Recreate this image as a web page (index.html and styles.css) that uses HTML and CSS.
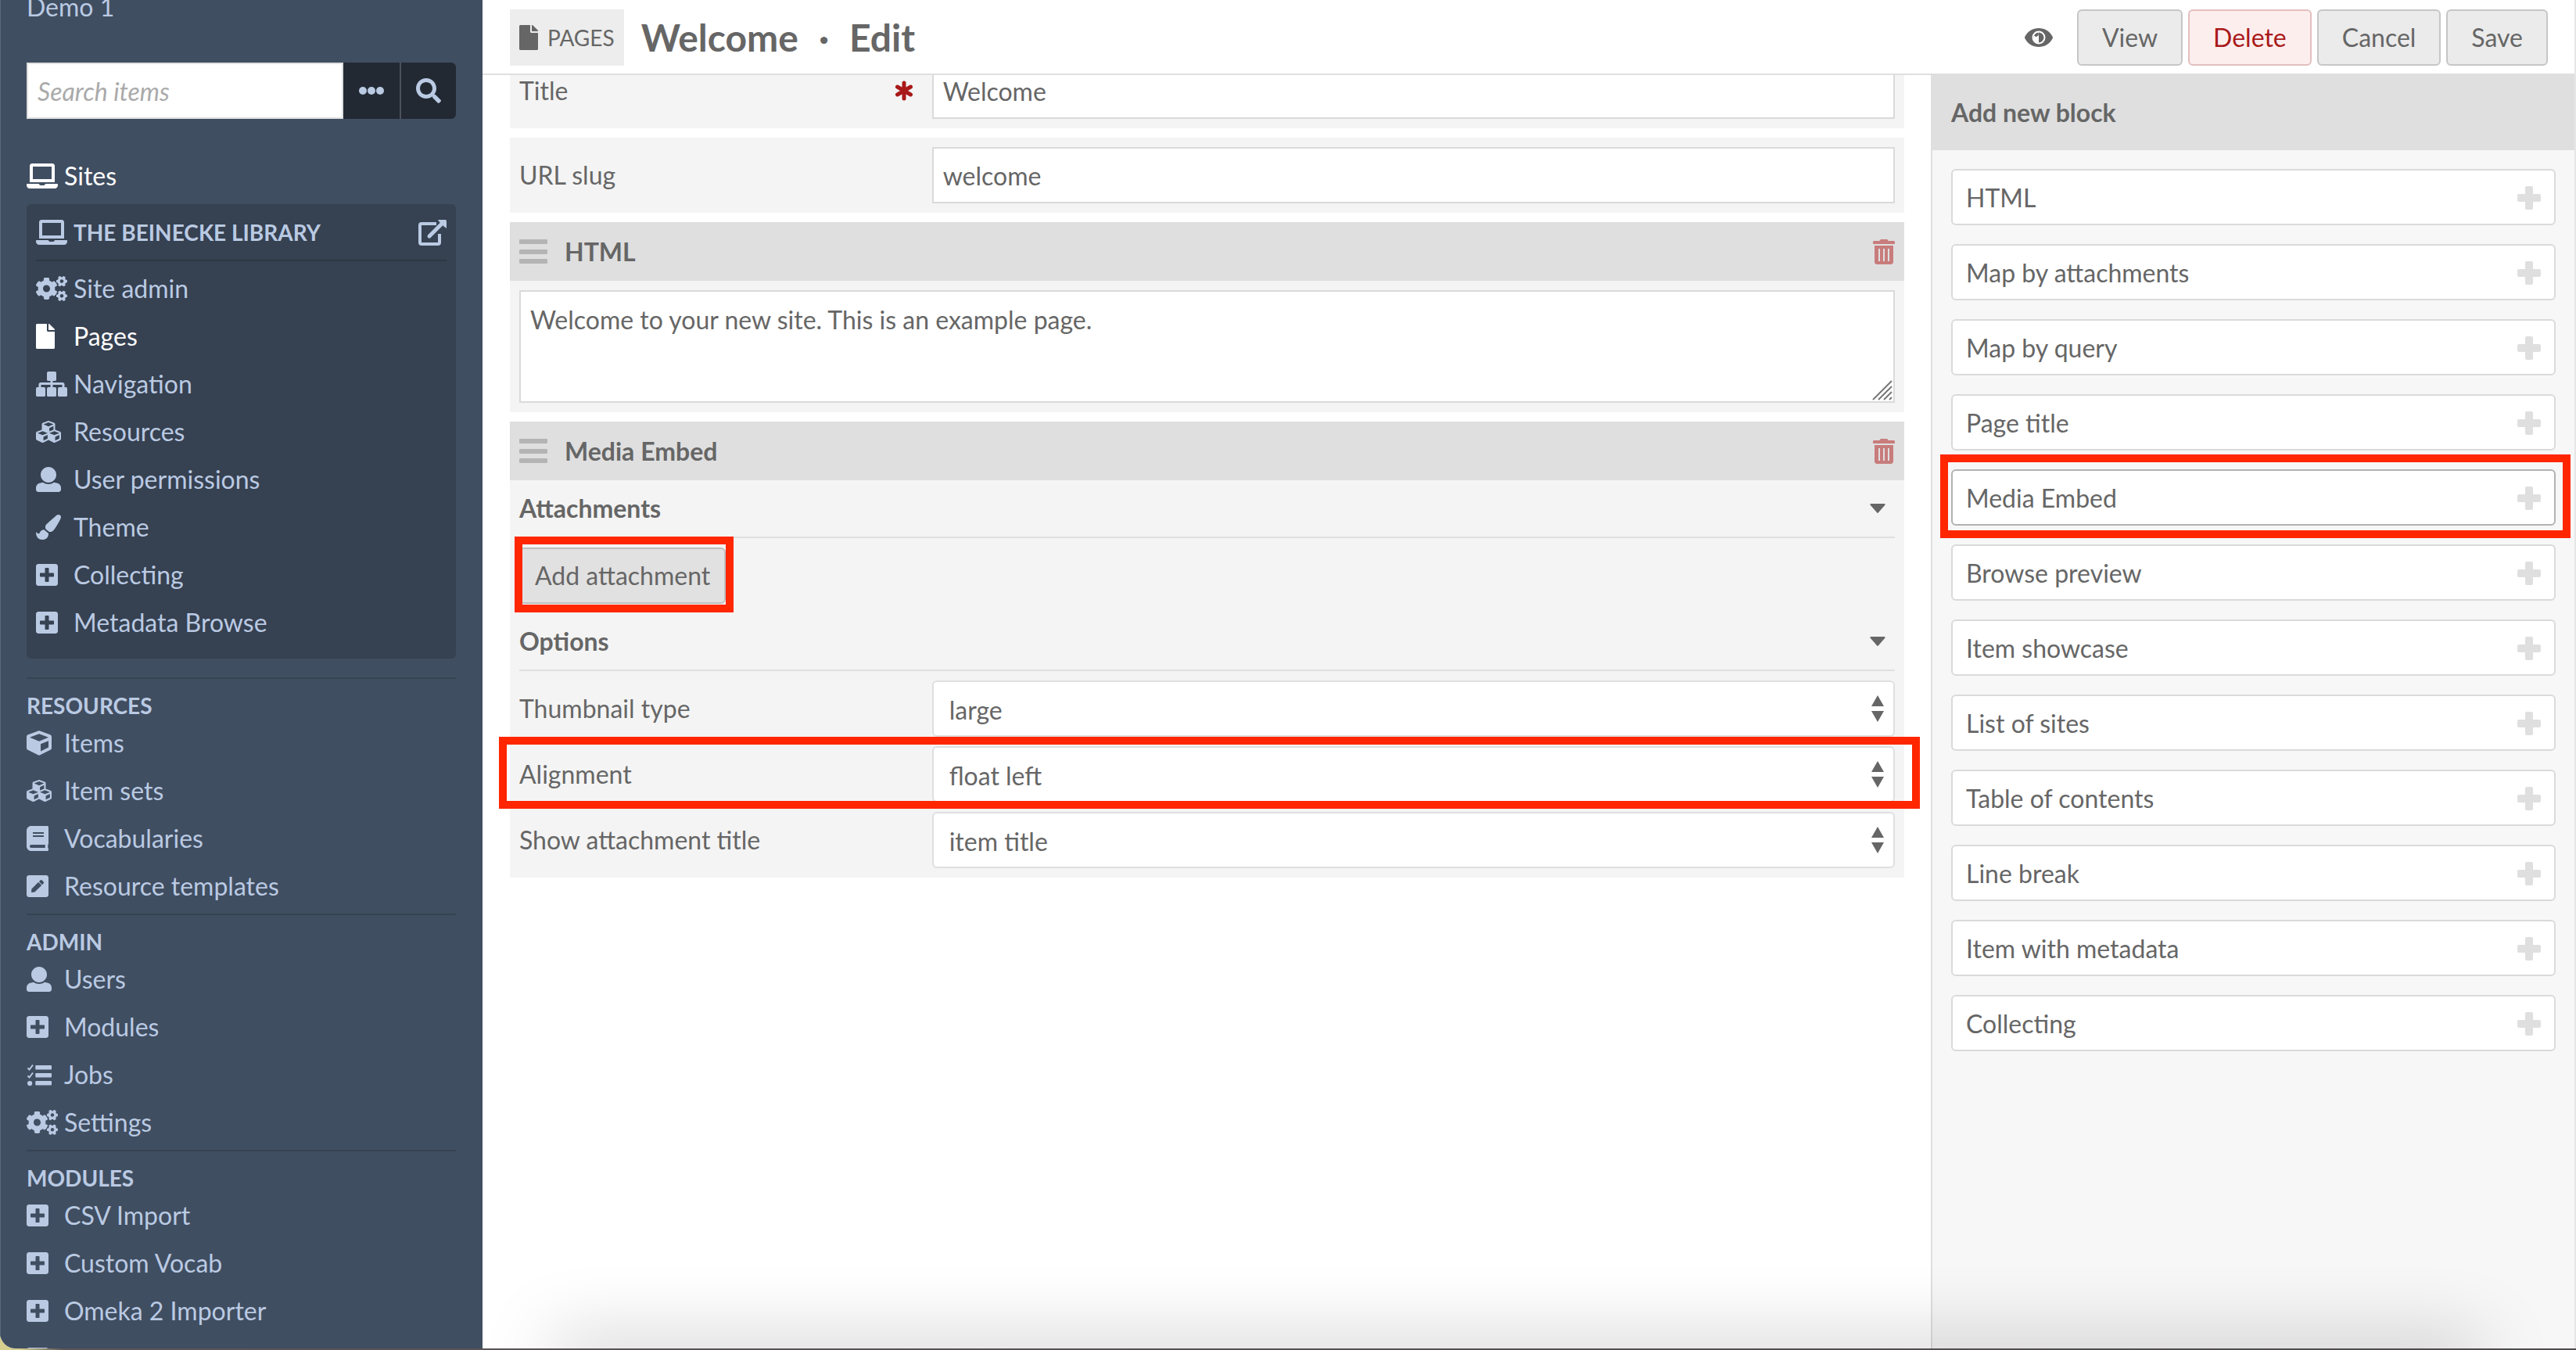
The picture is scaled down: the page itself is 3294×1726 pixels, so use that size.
FILE: index.html
```html
<!DOCTYPE html>
<html lang="en">
<head>
<meta charset="utf-8">
<title>Welcome · Edit</title>
<link rel="stylesheet" href="styles.css">
</head>
<body>
<svg class="sprite" aria-hidden="true">
  <symbol id="i-laptop" viewBox="0 0 640 512" preserveAspectRatio="xMinYMid"><path d="M624 416H381.54c-.74 19.81-14.71 32-32.74 32H288c-18.69 0-33.02-17.47-32.77-32H16c-8.8 0-16 7.2-16 16v16c0 35.2 28.8 64 64 64h512c35.2 0 64-28.8 64-64v-16c0-8.8-7.2-16-16-16zM576 48c0-26.4-21.6-48-48-48H112C85.6 0 64 21.6 64 48v336h512V48zm-64 272H128V64h384v256z"/></symbol>
  <symbol id="i-file" viewBox="0 0 384 512" preserveAspectRatio="xMinYMid"><path d="M224 136V0H24C10.7 0 0 10.7 0 24v464c0 13.3 10.7 24 24 24h336c13.3 0 24-10.7 24-24V160H248c-13.2 0-24-10.8-24-24zm160-14.1v6.1H256V0h6.1c6.4 0 12.5 2.5 17 7l97.9 98c4.5 4.5 7 10.6 7 16.9z"/></symbol>
  <symbol id="i-cogs" viewBox="0 0 640 512" preserveAspectRatio="xMinYMid">
    <path id="small-gear" d="M512.1 191l-8.2 14.3c-3 5.3-9.4 7.5-15.1 5.4-11.8-4.4-22.6-10.7-32.1-18.6-4.6-3.8-5.8-10.5-2.8-15.7l8.2-14.3c-6.9-8-12.3-17.3-15.9-27.4h-16.5c-6 0-11.2-4.3-12.2-10.3-2-12-2.1-24.6 0-37.1 1-6 6.2-10.4 12.2-10.4h16.5c3.6-10.1 9-19.4 15.9-27.4l-8.2-14.3c-3-5.2-1.9-11.9 2.8-15.7 9.5-7.9 20.4-14.2 32.1-18.6 5.7-2.1 12.1.1 15.1 5.4l8.2 14.3c10.5-1.9 21.2-1.9 31.7 0L552 6.3c3-5.3 9.4-7.5 15.1-5.4 11.8 4.4 22.6 10.7 32.1 18.6 4.6 3.8 5.8 10.5 2.8 15.7l-8.2 14.3c6.9 8 12.3 17.3 15.9 27.4h16.5c6 0 11.2 4.3 12.2 10.3 2 12 2.1 24.6 0 37.1-1 6-6.2 10.4-12.2 10.4h-16.5c-3.6 10.1-9 19.4-15.9 27.4l8.2 14.3c3 5.2 1.9 11.9-2.8 15.7-9.5 7.9-20.4 14.2-32.1 18.6-5.7 2.1-12.1-.1-15.1-5.4l-8.2-14.3c-10.4 1.9-21.2 1.9-31.7 0zm-10.5-58.8c38.5 29.6 82.4-14.3 52.8-52.8-38.5-29.7-82.4 14.3-52.8 52.8z"/>
    <use href="#small-gear" transform="translate(0 298.9)"/>
    <path d="M386.3 286.1l33.7 16.8c10.1 5.8 14.5 18.1 10.5 29.1-8.9 24.2-26.4 46.4-42.6 65.8-7.4 8.9-20.2 11.1-30.3 5.3l-29.1-16.8c-16 13.7-34.6 24.6-54.9 31.7v33.6c0 11.6-8.3 21.6-19.7 23.6-24.6 4.2-50.4 4.4-75.9 0-11.5-2-20-11.9-20-23.6V418c-20.3-7.2-38.9-18-54.9-31.7L74 403c-10 5.8-22.9 3.6-30.3-5.3-16.2-19.4-33.3-41.6-42.2-65.7-4-10.9.4-23.2 10.5-29.1l33.3-16.8c-3.9-20.9-3.9-42.4 0-63.4L12 205.8c-10.1-5.8-14.6-18.1-10.5-29 8.9-24.2 26-46.4 42.2-65.8 7.4-8.9 20.2-11.1 30.3-5.3l29.1 16.8c16-13.7 34.6-24.6 54.9-31.7V57.1c0-11.5 8.2-21.5 19.6-23.5 24.6-4.2 50.5-4.4 76-.1 11.5 2 20 11.9 20 23.6v33.6c20.3 7.2 38.9 18 54.9 31.7l29.1-16.8c10-5.8 22.9-3.6 30.3 5.3 16.2 19.4 33.2 41.6 42.1 65.8 4 10.9.1 23.2-10 29.1l-33.7 16.8c3.9 21 3.9 42.5 0 63.5zm-117.6 21.1c59.2-77-28.7-164.9-105.7-105.7-59.2 77 28.7 164.9 105.7 105.7z"/>
  </symbol>
  <symbol id="i-sitemap" viewBox="0 0 640 512" preserveAspectRatio="xMinYMid"><rect x="224" width="192" height="192" rx="30"/><rect y="320" width="192" height="192" rx="30"/><rect x="224" y="320" width="192" height="192" rx="30"/><rect x="448" y="320" width="192" height="192" rx="30"/><path d="M296 180h48v44h201.600c21.200 0 38.400 17.200 38.400 38.400V330h-48v-58H344v58h-48v-58H104v58H56v-67.600c0-21.200 17.200-38.400 38.400-38.400H296z"/></symbol>
  <symbol id="i-cubes" viewBox="0 0 512 512" preserveAspectRatio="xMinYMid"><path d="M488.6 250.2L392 214V105.5c0-15-9.3-28.4-23.4-33.7l-100-37.5c-8.1-3.1-17.1-3.1-25.3 0l-100 37.5c-14.1 5.3-23.4 18.7-23.4 33.7V214l-96.6 36.2C9.3 255.5 0 268.9 0 283.9V394c0 13.6 7.7 26.1 19.9 32.2l100 50c10.1 5.1 22.1 5.1 32.2 0l103.9-52 103.9 52c10.1 5.1 22.1 5.1 32.2 0l100-50c12.2-6.1 19.9-18.6 19.9-32.2V283.9c0-15-9.3-28.4-23.4-33.7zM358 214.8l-85 31.9v-68.2l85-37v73.3zM154 104.1l102-38.2 102 38.2v.6l-102 41.4-102-41.4v-.6zm84 291.1l-85 42.5v-79.1l85-38.8v75.4zm0-112l-102 41.4-102-41.4v-.6l102-38.2 102 38.2v.6zm240 112l-85 42.5v-79.1l85-38.8v75.4zm0-112l-102 41.4-102-41.4v-.6l102-38.2 102 38.2v.6z"/></symbol>
  <symbol id="i-cube" viewBox="0 0 512 512" preserveAspectRatio="xMinYMid"><path d="M239.1 6.3l-208 78c-18.7 7-31.1 25-31.1 45v225.1c0 18.2 10.3 34.8 26.5 42.9l208 104c13.5 6.8 29.4 6.8 42.9 0l208-104c16.3-8.1 26.5-24.8 26.5-42.9V129.3c0-20-12.4-37.9-31.1-44.9l-208-78C262 2.2 250 2.2 239.1 6.3zM256 68.4l192 72v1.1l-192 78-192-78v-1.1l192-72zm32 356V275.5l160-65v133.9l-160 80z"/></symbol>
  <symbol id="i-user" viewBox="0 0 512 512" preserveAspectRatio="xMinYMid"><path d="M256 0c88.366 0 160 71.634 160 160s-71.634 160-160 160S96 248.366 96 160 167.634 0 256 0zm183.283 333.821l-71.313-17.828c-74.923 53.89-165.738 41.864-223.94 0l-71.313 17.828C29.981 344.505 0 382.903 0 426.955V464c0 26.51 21.49 48 48 48h416c26.51 0 48-21.49 48-48v-37.045c0-44.052-29.981-82.45-72.717-93.134z"/></symbol>
  <symbol id="i-brush" viewBox="0 0 512 512" preserveAspectRatio="xMinYMid"><path d="M167.02 309.34c-40.12 2.58-76.53 17.86-97.19 72.3-2.35 6.21-8 9.98-14.59 9.98-11.11 0-45.46-27.67-55.25-34.35C0 439.62 37.93 512 128 512c75.86 0 128-43.77 128-120.19 0-3.11-.65-6.08-.97-9.13l-88.01-73.34zM457.89 0c-15.16 0-29.37 6.71-40.21 16.45C213.27 199.05 192 203.34 192 257.09c0 13.7 3.25 26.76 8.73 38.7l63.82 53.18c7.21 1.8 14.64 3.03 22.39 3.03 62.11 0 98.11-45.47 211.16-256.46 7.38-14.35 13.9-29.85 13.9-45.99C512 20.64 486 0 457.89 0z"/></symbol>
  <symbol id="i-plus-square" viewBox="0 0 448 512" preserveAspectRatio="xMinYMid"><path d="M400 32H48C21.5 32 0 53.5 0 80v352c0 26.5 21.5 48 48 48h352c26.5 0 48-21.5 48-48V80c0-26.5-21.5-48-48-48zm-32 252c0 6.6-5.4 12-12 12h-92v92c0 6.6-5.4 12-12 12h-56c-6.6 0-12-5.4-12-12v-92H92c-6.6 0-12-5.4-12-12v-56c0-6.6 5.4-12 12-12h92v-92c0-6.6 5.4-12 12-12h56c6.6 0 12 5.4 12 12v92h92c6.6 0 12 5.4 12 12v56z"/></symbol>
  <symbol id="i-book" viewBox="0 0 448 512" preserveAspectRatio="xMinYMid"><path d="M448 360V24c0-13.3-10.7-24-24-24H96C43 0 0 43 0 96v320c0 53 43 96 96 96h328c13.3 0 24-10.7 24-24v-16c0-7.5-3.5-14.3-8.9-18.7-4.2-15.4-4.2-59.3 0-74.7 5.4-4.3 8.9-11.1 8.9-18.6zM128 134c0-3.3 2.7-6 6-6h212c3.3 0 6 2.7 6 6v20c0 3.3-2.7 6-6 6H134c-3.3 0-6-2.7-6-6v-20zm0 64c0-3.3 2.7-6 6-6h212c3.3 0 6 2.7 6 6v20c0 3.3-2.7 6-6 6H134c-3.3 0-6-2.7-6-6v-20zm253.4 250H96c-17.7 0-32-14.3-32-32 0-17.6 14.4-32 32-32h285.4c-1.9 17.1-1.9 46.9 0 64z"/></symbol>
  <symbol id="i-pen-square" viewBox="0 0 448 512" preserveAspectRatio="xMinYMid"><path d="M400 480H48c-26.5 0-48-21.500-48-48V80c0-26.500 21.500-48 48-48h352c26.500 0 48 21.500 48 48v352c0 26.500-21.500 48-48 48zM238.100 177.900L102.400 313.600l-6.300 57.100c-.8 7.600 5.600 14.100 13.300 13.300l57.100-6.300L302.200 242c2.300-2.300 2.300-6.100 0-8.500L246.700 178c-2.500-2.400-6.300-2.400-8.600-.1zM345 165.100L314.900 135c-9.400-9.400-24.600-9.400-33.900 0l-23.100 23.100c-2.300 2.300-2.300 6.100 0 8.500l55.500 55.500c2.300 2.300 6.100 2.300 8.500 0L345 199c9.300-9.300 9.300-24.500 0-33.900z"/></symbol>
  <symbol id="i-tasks" viewBox="0 0 512 512" preserveAspectRatio="xMinYMid"><path d="M22 118l34 34 72-94M22 278l34 34 72-94" fill="none" stroke="currentColor" stroke-width="30"/><circle cx="66" cy="432" r="50"/><rect x="180" y="62" width="332" height="88" rx="16"/><rect x="180" y="222" width="332" height="88" rx="16"/><rect x="180" y="382" width="332" height="88" rx="16"/></symbol>
  <symbol id="i-search" viewBox="0 0 512 512"><path d="M505 442.7L405.3 343c-4.5-4.5-10.6-7-17-7H372c27.600-35.300 44-79.700 44-128C416 93.100 322.900 0 208 0S0 93.100 0 208s93.100 208 208 208c48.300 0 92.700-16.400 128-44v16.300c0 6.400 2.500 12.500 7 17l99.700 99.700c9.400 9.400 24.600 9.400 33.900 0l28.300-28.300c9.400-9.400 9.400-24.600.1-34zM208 336c-70.700 0-128-57.200-128-128 0-70.700 57.200-128 128-128 70.700 0 128 57.200 128 128 0 70.700-57.200 128-128 128z"/></symbol>
  <symbol id="i-dots" viewBox="0 0 32 32"><circle cx="5" cy="16" r="5"/><circle cx="16" cy="16" r="5"/><circle cx="27" cy="16" r="5"/></symbol>
  <symbol id="i-external" viewBox="0 0 36 34"><path d="M23 6H4a2 2 0 0 0-2 2v22a2 2 0 0 0 2 2h21a2 2 0 0 0 2-2V19" fill="none" stroke="currentColor" stroke-width="4"/><path d="M14 22L32 4" fill="none" stroke="currentColor" stroke-width="5" stroke-linecap="round"/><path d="M25 1h9.500a1.500 1.500 0 0 1 1.500 1.500V12l-4-3-5-5z"/></symbol>
  <symbol id="i-eye" viewBox="0 0 36 26"><path fill-rule="evenodd" d="M18 1C10.500 1 4 5 .5 11.500a3 3 0 0 0 0 3C4 21 10.500 25 18 25s14-4 17.500-10.500a3 3 0 0 0 0-3C32 5 25.500 1 18 1zm0 3.500a8.500 8.500 0 1 1 0 17 8.500 8.500 0 0 1 0-17zm0 2a6.500 6.500 0 1 0 6.500 6.500A6.500 6.500 0 0 0 17 6.600a3 3 0 1 1-4.800 4A6.500 6.500 0 0 0 18 19.500z"/></symbol>
  <symbol id="i-asterisk" viewBox="0 0 24 26"><path d="M12 3v20M3.500 8l17 10M20.500 8l-17 10" fill="none" stroke="currentColor" stroke-width="5" stroke-linecap="round"/></symbol>
  <symbol id="i-bars" viewBox="0 0 36 32"><rect y="0" width="36" height="6" rx="1"/><rect y="13" width="36" height="6" rx="1"/><rect y="25" width="36" height="6" rx="1"/></symbol>
  <symbol id="i-trash" viewBox="0 0 448 512"><path fill-rule="evenodd" d="M0 84V56c0-13.300 10.700-24 24-24h112l9.400-18.700c4-8.200 12.300-13.300 21.400-13.300h114.300c9.100 0 17.400 5.100 21.500 13.300L312 32h112c13.300 0 24 10.700 24 24v28c0 6.600-5.400 12-12 12H12C5.400 96 0 90.600 0 84zM32 128h384v336c0 26.500-21.500 48-48 48H80c-26.500 0-48-21.500-48-48zM112 192v256h32V192zm96 0v256h32V192zm96 0v256h32V192z"/></symbol>
  <symbol id="i-plus" viewBox="0 0 30 30"><path d="M12 0h6a2 2 0 0 1 2 2v8h8a2 2 0 0 1 2 2v6a2 2 0 0 1-2 2h-8v8a2 2 0 0 1-2 2h-6a2 2 0 0 1-2-2v-8H2a2 2 0 0 1-2-2v-6a2 2 0 0 1 2-2h8V2a2 2 0 0 1 2-2z"/></symbol>
  <symbol id="i-caret" viewBox="0 0 20 12"><path d="M1.500 0h17a1 1 0 0 1 .8 1.700l-8.300 9.600a1.300 1.300 0 0 1-2 0L.7 1.700A1 1 0 0 1 1.500 0z"/></symbol>
  <symbol id="i-sort" viewBox="0 0 16 34"><path d="M8 0l8 14H0zM8 34l8-14H0z"/></symbol>
  <symbol id="i-grip" viewBox="0 0 26 26"><path d="M1 25L25 1M8 25L25 8M15 25l10-10M22 25l3-3" fill="none" stroke="currentColor" stroke-width="2"/></symbol>
</svg>

<div class="window">
  <aside class="sidebar">
    <a class="brand" href="#">Demo 1</a>
    <form class="search">
      <input class="search-input" type="text" placeholder="Search items" aria-label="Search items">
      <button class="search-btn" type="button" aria-label="Search options"><svg class="icon"><use href="#i-dots"/></svg></button>
      <button class="search-btn search-go" type="button" aria-label="Search"><svg class="icon"><use href="#i-search"/></svg></button>
    </form>
    <a class="nav-link active sites" href="#"><svg class="icon"><use href="#i-laptop"/></svg>Sites</a>
    <nav class="site-box">
      <div class="site-title">
        <a class="site-name" href="#"><svg class="icon"><use href="#i-laptop"/></svg>THE BEINECKE LIBRARY</a>
        <a class="external" href="#" aria-label="Open site"><svg><use href="#i-external"/></svg></a>
      </div>
      <ul class="nav-list">
        <li><a class="nav-link" href="#"><svg class="icon"><use href="#i-cogs"/></svg>Site admin</a></li>
        <li><a class="nav-link active" href="#"><svg class="icon"><use href="#i-file"/></svg>Pages</a></li>
        <li><a class="nav-link" href="#"><svg class="icon"><use href="#i-sitemap"/></svg>Navigation</a></li>
        <li><a class="nav-link" href="#"><svg class="icon"><use href="#i-cubes"/></svg>Resources</a></li>
        <li><a class="nav-link" href="#"><svg class="icon"><use href="#i-user"/></svg>User permissions</a></li>
        <li><a class="nav-link" href="#"><svg class="icon"><use href="#i-brush"/></svg>Theme</a></li>
        <li><a class="nav-link" href="#"><svg class="icon"><use href="#i-plus-square"/></svg>Collecting</a></li>
        <li><a class="nav-link" href="#"><svg class="icon"><use href="#i-plus-square"/></svg>Metadata Browse</a></li>
      </ul>
    </nav>
    <nav class="nav-section">
      <h4>RESOURCES</h4>
      <ul class="nav-list">
        <li><a class="nav-link" href="#"><svg class="icon"><use href="#i-cube"/></svg>Items</a></li>
        <li><a class="nav-link" href="#"><svg class="icon"><use href="#i-cubes"/></svg>Item sets</a></li>
        <li><a class="nav-link" href="#"><svg class="icon"><use href="#i-book"/></svg>Vocabularies</a></li>
        <li><a class="nav-link" href="#"><svg class="icon"><use href="#i-pen-square"/></svg>Resource templates</a></li>
      </ul>
    </nav>
    <nav class="nav-section">
      <h4>ADMIN</h4>
      <ul class="nav-list">
        <li><a class="nav-link" href="#"><svg class="icon"><use href="#i-user"/></svg>Users</a></li>
        <li><a class="nav-link" href="#"><svg class="icon"><use href="#i-plus-square"/></svg>Modules</a></li>
        <li><a class="nav-link" href="#"><svg class="icon"><use href="#i-tasks"/></svg>Jobs</a></li>
        <li><a class="nav-link" href="#"><svg class="icon"><use href="#i-cogs"/></svg>Settings</a></li>
      </ul>
    </nav>
    <nav class="nav-section">
      <h4>MODULES</h4>
      <ul class="nav-list">
        <li><a class="nav-link" href="#"><svg class="icon"><use href="#i-plus-square"/></svg>CSV Import</a></li>
        <li><a class="nav-link" href="#"><svg class="icon"><use href="#i-plus-square"/></svg>Custom Vocab</a></li>
        <li><a class="nav-link" href="#"><svg class="icon"><use href="#i-plus-square"/></svg>Omeka 2 Importer</a></li>
        <li><span class="nav-link"><svg class="icon"><use href="#i-plus-square"/></svg></span></li>
      </ul>
    </nav>
  </aside>

  <main class="main">
    <header class="page-header">
      <span class="section-tag"><svg class="icon"><use href="#i-file"/></svg>PAGES</span>
      <h1 class="page-title"><span>Welcome</span><span class="dot">·</span><span>Edit</span></h1>
      <div class="actions">
        <button class="eye" type="button" aria-label="Visibility"><svg><use href="#i-eye"/></svg></button>
        <button class="btn" type="button">View</button>
        <button class="btn danger" type="button">Delete</button>
        <button class="btn" type="button">Cancel</button>
        <button class="btn" type="button">Save</button>
      </div>
    </header>
    <div class="columns">
      <div class="content">
        <form class="page-form">
          <div class="field">
            <label class="field-label" for="title">Title<svg class="required"><use href="#i-asterisk"/></svg></label>
            <input class="text-input" id="title" type="text" value="Welcome">
          </div>
          <div class="field">
            <label class="field-label" for="slug">URL slug</label>
            <input class="text-input" id="slug" type="text" value="welcome">
          </div>
          <section class="block">
            <header class="block-header"><svg class="bars"><use href="#i-bars"/></svg><h2>HTML</h2><button class="trash" type="button" aria-label="Remove block"><svg><use href="#i-trash"/></svg></button></header>
            <div class="html-body">
              <textarea class="html-text" aria-label="HTML">Welcome to your new site. This is an example page.</textarea>
              <svg class="grip"><use href="#i-grip"/></svg>
            </div>
          </section>
          <section class="block">
            <header class="block-header"><svg class="bars"><use href="#i-bars"/></svg><h2>Media Embed</h2><button class="trash" type="button" aria-label="Remove block"><svg><use href="#i-trash"/></svg></button></header>
            <div class="embed-body">
              <h3 class="group-title">Attachments<svg class="caret"><use href="#i-caret"/></svg></h3>
              <div class="attach marked marked-attach"><button class="btn attach-btn" type="button">Add attachment</button></div>
              <h3 class="group-title">Options<svg class="caret"><use href="#i-caret"/></svg></h3>
              <div class="option-list">
                <div class="option">
                  <label class="field-label" for="thumb">Thumbnail type</label>
                  <div class="select-wrap"><select id="thumb"><option>large</option></select><svg class="sort"><use href="#i-sort"/></svg></div>
                </div>
                <div class="option marked marked-option">
                  <label class="field-label" for="align">Alignment</label>
                  <div class="select-wrap"><select id="align"><option>float left</option></select><svg class="sort"><use href="#i-sort"/></svg></div>
                </div>
                <div class="option">
                  <label class="field-label" for="showtitle">Show attachment title</label>
                  <div class="select-wrap"><select id="showtitle"><option>item title</option></select><svg class="sort"><use href="#i-sort"/></svg></div>
                </div>
              </div>
            </div>
          </section>
        </form>
      </div>
      <aside class="panel">
        <h2 class="panel-title">Add new block</h2>
        <ul class="block-list">
          <li><button class="add" type="button">HTML<svg><use href="#i-plus"/></svg></button></li>
          <li><button class="add" type="button">Map by attachments<svg><use href="#i-plus"/></svg></button></li>
          <li><button class="add" type="button">Map by query<svg><use href="#i-plus"/></svg></button></li>
          <li><button class="add" type="button">Page title<svg><use href="#i-plus"/></svg></button></li>
          <li class="marked marked-block"><button class="add focused" type="button">Media Embed<svg><use href="#i-plus"/></svg></button></li>
          <li><button class="add" type="button">Browse preview<svg><use href="#i-plus"/></svg></button></li>
          <li><button class="add" type="button">Item showcase<svg><use href="#i-plus"/></svg></button></li>
          <li><button class="add" type="button">List of sites<svg><use href="#i-plus"/></svg></button></li>
          <li><button class="add" type="button">Table of contents<svg><use href="#i-plus"/></svg></button></li>
          <li><button class="add" type="button">Line break<svg><use href="#i-plus"/></svg></button></li>
          <li><button class="add" type="button">Item with metadata<svg><use href="#i-plus"/></svg></button></li>
          <li><button class="add" type="button">Collecting<svg><use href="#i-plus"/></svg></button></li>
        </ul>
      </aside>
    </div>
    <div class="dock-shadow"></div>
  </main>
</div>
</body>
</html>
```
FILE: styles.css
```css
*, *::before, *::after { box-sizing: border-box; }

body {
  margin: 0;
  height: 100vh;
  padding-bottom: 2px;
  overflow: hidden;
  background: linear-gradient(90deg, #d6cf8e 0, #d6cf8e 24px, #5b5557 80px, #504b4d 100%);
  color: #666;
  font: 32px/48px Lato, "Open Sans", sans-serif;
  text-rendering: optimizeLegibility;
}

h1, h2, h3, h4, ul { margin: 0; padding: 0; font-size: inherit; list-style: none; }
a { color: inherit; text-decoration: none; }
button, input, select, textarea { margin: 0; font: inherit; color: inherit; border-radius: 0; text-rendering: inherit; }
button { cursor: pointer; }
svg { display: block; fill: currentColor; flex: none; }
.sprite { position: absolute; width: 0; height: 0; }

.window {
  display: flex;
  height: 100%;
  overflow: hidden;
  background: #fff;
  border-right: 2px solid #e6e6e6;
  border-bottom-left-radius: 20px;
}

/* Sidebar */
.sidebar {
  flex: none;
  width: 617px;
  padding: 0 34px 0 33px;
  overflow: hidden;
  background: #404e61;
  border-left: 1px solid #5a6778;
  color: #bacae3;
}
.brand { display: block; margin-top: -15px; }
.search { display: flex; height: 72px; margin-top: 47px; }
.search-input {
  flex: 1;
  min-width: 0;
  padding: 2px 12px 0;
  border: 2px solid #dfdfdf;
  background: #fff;
  color: #666;
}
.search-input::placeholder { color: #aaa; font-style: italic; opacity: 1; }
.search-btn {
  display: flex;
  align-items: center;
  justify-content: center;
  width: 72px;
  padding: 0;
  border: 0;
  background: #222933;
}
.search-btn .icon { width: 32px; height: 32px; }
.search-go { border-left: 2px solid #4b515b; border-radius: 0 6px 6px 0; }

.nav-link { display: flex; align-items: center; height: 61px; white-space: nowrap; }
.nav-link .icon, .site-name .icon { width: 40px; height: 32px; margin-right: 8px; }
.active { color: #fff; }
.sites { margin: 42px 0 6px; }
.site-box { padding: 0 12px 16px; border-radius: 6px; background: #364151; }
.site-title {
  display: flex;
  justify-content: space-between;
  align-items: center;
  height: 73px;
  margin-bottom: 4px;
  border-bottom: 2px solid #2c3844;
}
.site-name { display: flex; align-items: center; font-size: 28px; font-weight: 700; }
.external svg { width: 36px; height: 34px; }
.nav-section { margin-bottom: 5px; padding-top: 17px; border-top: 2px solid #364353; }
.site-box + .nav-section { margin-top: 24px; }
.nav-section h4 { font-size: 28px; line-height: 34px; }

/* Main area */
.main { position: relative; flex: 1; min-width: 0; display: flex; flex-direction: column; overflow: hidden; }
.page-header {
  display: flex;
  align-items: center;
  flex: none;
  height: 96px;
  padding: 2px 34px 0 35px;
  border-bottom: 2px solid #dfdfdf;
}
.section-tag {
  display: flex;
  align-items: center;
  gap: 12px;
  height: 72px;
  padding: 0 12px;
  background: #ededed;
  font-size: 28px;
}
.section-tag .icon { width: 24px; height: 32px; }
.page-title { display: flex; gap: 26px; margin-left: 22px; font-size: 48px; font-weight: 700; }
.actions { display: flex; align-items: center; gap: 7px; margin-left: auto; }
.eye { padding: 0; margin-right: 24px; border: 0; background: none; }
.eye svg { width: 36px; height: 26px; }
.btn {
  height: 72px;
  padding: 0 30px;
  border: 2px solid #c6c6c6;
  border-radius: 6px;
  background: #ebebeb;
}
.danger { border-color: #e4bfbf; background: #fdeeee; color: #a91919; }

.columns { display: flex; flex: 1; min-height: 0; }
.content { flex: 1; min-width: 0; padding: 0 34px 0 35px; overflow: hidden; }
/* The form is scrolled a little way under the header. */
.page-form { display: flex; flex-direction: column; gap: 12px; margin-top: -28px; }
.field { display: flex; align-items: center; padding: 12px; background: #f4f4f4; }
.field-label { display: flex; align-items: center; justify-content: space-between; width: 30%; padding-right: 24px; }
.required { width: 24px; height: 26px; color: #a91919; }
.text-input { width: 70%; height: 72px; padding: 0 12px; border: 2px solid #dadada; background: #fff; }

.block { background: #f4f4f4; }
.block-header { display: flex; align-items: center; height: 75px; padding: 0 12px; background: #dfdfdf; }
.bars { width: 36px; height: 32px; margin-right: 22px; color: #b4b4b4; }
.trash { margin-left: auto; padding: 0; border: 0; background: none; color: #c87c7c; }
.trash svg { width: 28px; height: 32px; }
.html-body { position: relative; padding: 12px; }
.html-text {
  display: block;
  width: 100%;
  height: 144px;
  padding: 12px;
  border: 2px solid #dadada;
  background: #fff;
  resize: none;
}
.grip { position: absolute; right: 15px; bottom: 15px; width: 26px; height: 26px; color: #777; }

.embed-body { padding: 0 12px 12px; }
.group-title {
  display: flex;
  align-items: center;
  justify-content: space-between;
  height: 74px;
  padding-right: 12px;
  border-bottom: 2px solid #dfdfdf;
}
.caret { width: 20px; height: 12px; }
.attach { width: fit-content; margin: 12px 0; }
.attach-btn { display: block; padding: 0 18px; border-color: #bebebe; background: #e1e1e1; }
.option-list { display: flex; flex-direction: column; gap: 12px; margin-top: 12px; }
.option { display: flex; align-items: center; }
.select-wrap { position: relative; width: 70%; }
.select-wrap select {
  display: block;
  width: 100%;
  height: 72px;
  padding: 4px 20px 0;
  border: 2px solid #dfdfdf;
  border-radius: 6px;
  background: #fff;
  appearance: none;
}
.sort { position: absolute; right: 14px; top: 19px; width: 16px; height: 34px; }

/* Block panel */
.panel { flex: none; width: 823px; border-left: 2px solid #dfdfdf; background: #f7f7f7; }
.panel-title { padding: 24px; background: #dfdfdf; }
.block-list { display: flex; flex-direction: column; gap: 24px; padding: 24px; }
.add {
  display: flex;
  align-items: center;
  justify-content: space-between;
  width: 100%;
  height: 72px;
  padding: 2px 17px 0;
  border: 2px solid #dadada;
  border-radius: 6px;
  background: #fff;
}
.add svg { width: 30px; height: 30px; color: #dfdfdf; }
.focused { border-color: #b2b2b2; }

/* Red call-out frames */
.marked { position: relative; }
.marked::after { content: ""; position: absolute; border: 10px solid #ff2600; pointer-events: none; }
.marked-attach::after { inset: -14px -10px -11px -6px; }
.marked-option::after { inset: -12px -32px -8px -26px; }
.marked-block::after { inset: -19px -19px -16px -14px; }

.dock-shadow {
  position: absolute;
  left: 100px;
  right: 130px;
  bottom: -20px;
  height: 20px;
  box-shadow: 0 0 90px 10px rgba(0, 0, 0, .25);
  pointer-events: none;
}
```
